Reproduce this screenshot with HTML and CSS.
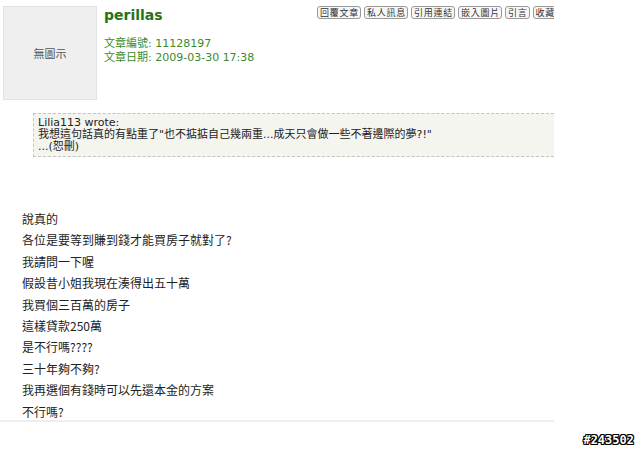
FILE: index.html
```html
<!DOCTYPE html>
<html lang="zh-Hant">
<head>
    <meta charset="UTF-8">
    <title>perillas - 文章</title>
    <link rel="stylesheet" href="styles.css">
</head>
<body>
<div class="post">
    <div class="post__head">
        <div class="post__avatar">無圖示</div>
        <div class="post__info">
            <div class="post__name">perillas</div>
            <div class="post__meta">文章編號: 11128197</div>
            <div class="post__meta">文章日期: 2009-03-30 17:38</div>
        </div>
        <div class="post__tools">
            <span class="tool-btn">回覆文章</span>
            <span class="tool-btn">私人訊息</span>
            <span class="tool-btn">引用連結</span>
            <span class="tool-btn">嵌入圖片</span>
            <span class="tool-btn">引言</span>
            <span class="tool-btn">收藏</span>
        </div>
    </div>
    <div class="quote">
        <div>Lilia113 wrote:</div>
        <div>我想這句話真的有點重了"也不掂掂自己幾兩重...成天只會做一些不著邊際的夢?!"</div>
        <div>...(恕刪)</div>
    </div>
    <div class="post__body">
        <p>說真的</p>
        <p>各位是要等到賺到錢才能買房子就對了?</p>
        <p>我請問一下喔</p>
        <p>假設昔小姐我現在湊得出五十萬</p>
        <p>我買個三百萬的房子</p>
        <p>這樣貸款250萬</p>
        <p>是不行嗎????</p>
        <p>三十年夠不夠?</p>
        <p>我再選個有錢時可以先還本金的方案</p>
        <p>不行嗎?</p>
    </div>
</div>
<div class="stamp">#243502</div>
</body>
</html>
```

FILE: styles.css
```css
*{
    box-sizing: border-box;
    margin:0;
    padding:0;
}
body{
    background-color: #fff;
    font-family: "DejaVu Sans", Verdana, "Noto Sans CJK TC", sans-serif;
    color: #222;
    width:640px;
    height:450px;
    overflow:hidden;
    position:relative;
}
.post{
    width:554px;
    overflow:hidden;
    border-bottom:2px solid #eeeeee;
}
.post__head{
    display:flex;
    padding:6px 0 0 3px;
}
.post__avatar{
    flex-shrink:0;
    width:94px;
    height:94px;
    background-color:#efefef;
    border:1px solid #e2e2e2;
    display:flex;
    align-items:center;
    justify-content:center;
    font-size:11px;
    color:#555;
    font-family: "Noto Sans CJK TC", sans-serif;
}
.post__info{
    flex-shrink:0;
    padding-left:7px;
    width:220px;
}
.post__name{
    font-size:14px;
    font-weight:bold;
    color:#267316;
    line-height:16px;
    margin-top:1px;
    margin-bottom:14px;
}
.post__meta{
    font-size:11px;
    line-height:14px;
    color:#3c8a2c;
}
.post__tools{
    flex-shrink:0;
    display:flex;
    gap:3px;
    white-space:nowrap;
}
.tool-btn{
    display:inline-block;
    height:13px;
    line-height:11px;
    padding:0 1px 0 2px;
    font-size:9px;
    letter-spacing:0.75px;
    color:#333;
    background-color:#f6f6f6;
    border:1px solid #9a9a9a;
    border-radius:3px;
    font-family: "Noto Sans CJK TC", sans-serif;
}
.quote{
    margin:13px 0 0 33px;
    width:521px;
    background-color:#f5f5f0;
    border:1px dashed #c4c4c4;
    border-right:none;
    padding:3px 4px;
    font-size:11px;
    line-height:12px;
    color:#222;
}
.post__body{
    padding:51px 0 0 22px;
    margin-bottom:-2px;
    font-size:12px;
    line-height:21.4px;
    font-family: "Noto Sans CJK TC", sans-serif;
    color:#222;
}
.stamp{
    position:absolute;
    right:6px;
    bottom:3px;
    font-family: "DejaVu Sans Mono", monospace;
    font-weight:bold;
    font-size:12px;
    color:#fff;
    text-shadow: 1px 1px 0 #000, -1px -1px 0 #000, 1px -1px 0 #000, -1px 1px 0 #000, 0 1px 0 #000, 1px 0 0 #000, 0 -1px 0 #000, -1px 0 0 #000;
}
```
